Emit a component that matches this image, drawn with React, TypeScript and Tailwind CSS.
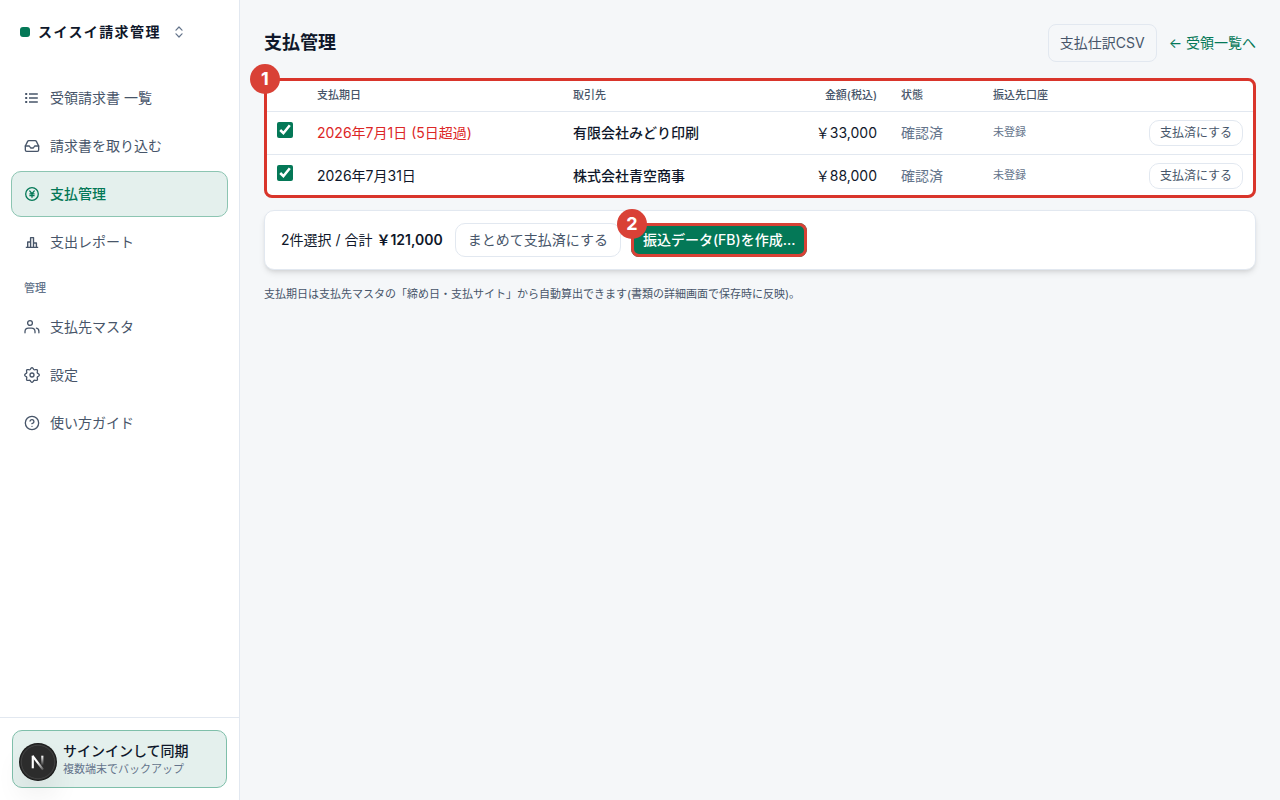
import React, { useState } from 'react';
import { CircleHelp, Inbox } from 'lucide-react';

const ListIcon = () => (
  <svg viewBox="0 0 16 16" className="size-4" fill="none" stroke="currentColor" strokeWidth="1.5" aria-hidden="true">
    <path d="M5 4h8.8M5 8h8.8M5 12h8.8" />
    <path d="M1.2 4h2M1.2 8h2M1.2 12h2" strokeWidth="2" />
  </svg>
);

const YenIcon = () => (
  <svg viewBox="0 0 16 16" className="size-4" fill="none" stroke="currentColor" strokeWidth="1.3" strokeLinecap="round" aria-hidden="true">
    <circle cx="8" cy="8" r="6.3" />
    <path d="M5.7 4.9L8 7.7l2.3-2.8M8 7.7v3.6M5.9 7.9h4.2M5.9 9.7h4.2" />
  </svg>
);

const BarsIcon = () => (
  <svg viewBox="0 0 16 16" className="size-4" fill="none" stroke="currentColor" strokeWidth="1.4" strokeLinejoin="round" aria-hidden="true">
    <path d="M1.8 13.4h12.4M3.7 13.4V8h2.9M6.6 13.4V3.6h2.9v9.8M9.5 9h2.9v4.4" />
  </svg>
);

const PeopleIcon = () => (
  <svg viewBox="0 0 16 16" className="size-4" fill="none" stroke="currentColor" strokeWidth="1.3" strokeLinecap="round" aria-hidden="true">
    <circle cx="6" cy="4" r="2.4" />
    <path d="M1 13.8v-1.3a3.4 3.4 0 0 1 3.4-3.3h3.2a3.4 3.4 0 0 1 3.4 3.3v1.3" />
    <path d="M12.4 9.2a3.2 3.2 0 0 1 2.5 3.2v1.4" />
  </svg>
);

// eight round teeth
const gearPoints = Array.from({ length: 96 }, (_, i) => {
  const a = (i / 96) * Math.PI * 2;
  const r = 6.5 + 0.8 * Math.cos(8 * a);
  return `${(8 + r * Math.cos(a)).toFixed(2)},${(8 + r * Math.sin(a)).toFixed(2)}`;
}).join(' ');

const GearIcon = () => (
  <svg viewBox="0 0 16 16" className="size-4" fill="none" stroke="currentColor" strokeWidth="1.3" strokeLinejoin="round" aria-hidden="true">
    <polygon points={gearPoints} />
    <circle cx="8" cy="8" r="2" />
  </svg>
);

const mainNav = [
  { label: '受領請求書 一覧', icon: <ListIcon /> },
  { label: '請求書を取り込む', icon: <Inbox className="size-4" strokeWidth={2} /> },
  { label: '支払管理', icon: <YenIcon />, active: true },
  { label: '支出レポート', icon: <BarsIcon /> },
];

const adminNav = [
  { label: '支払先マスタ', icon: <PeopleIcon /> },
  { label: '設定', icon: <GearIcon /> },
  { label: '使い方ガイド', icon: <CircleHelp className="size-4" strokeWidth={2} /> },
];

const payments = [
  { id: 1, due: '2026年7月1日 (5日超過)', overdue: true, vendor: '有限会社みどり印刷', amount: 33000 },
  { id: 2, due: '2026年7月31日', overdue: false, vendor: '株式会社青空商事', amount: 88000 },
];

const yen = (n: number) => n.toLocaleString('ja-JP', { style: 'currency', currency: 'JPY' });

type NavItemProps = { label: string; icon: React.ReactNode; active?: boolean };

const NavItem = ({ label, icon, active }: NavItemProps) => (
  <a
    href="#"
    aria-current={active ? 'page' : undefined}
    className={
      active
        ? 'flex h-[46px] items-center gap-2.5 rounded-[10px] border border-[#8cc5b2] bg-[#e4f0ed] px-3 font-medium text-[#047857]'
        : 'flex h-[46px] items-center gap-2.5 rounded-[10px] border border-transparent px-3 text-[#475569]'
    }
  >
    {icon}
    {label}
  </a>
);

const StepBadge = ({ n }: { n: number }) => (
  <span className="absolute -top-3.5 -left-3.5 flex size-[30px] items-center justify-center rounded-full bg-[#d94136] text-lg font-bold text-white">
    {n}
  </span>
);

const App = () => {
  const [selected, setSelected] = useState<number[]>([1, 2]);

  const toggle = (id: number) =>
    setSelected((prev) => (prev.includes(id) ? prev.filter((x) => x !== id) : [...prev, id]));

  const total = payments.filter((p) => selected.includes(p.id)).reduce((sum, p) => sum + p.amount, 0);

  return (
    <div
      lang="ja"
      className="flex min-h-screen bg-[#f5f7f9] font-['Inter','Noto_Sans_CJK_JP',sans-serif] text-sm text-[#0f172a]"
    >
      <aside className="flex w-60 shrink-0 flex-col border-r border-[#e2e8f0] bg-white">
        <button type="button" className="flex h-16 items-center gap-2 px-5 text-left">
          <span className="size-2.5 rounded-[3px] bg-[#047857]" />
          <span className="font-bold tracking-widest">スイスイ請求管理</span>
          <svg viewBox="0 0 16 16" className="ml-0.5 size-4" fill="none" stroke="#64748b" strokeWidth="1.2" strokeLinecap="round" strokeLinejoin="round" aria-hidden="true">
            <path d="M5 6.2L8 3l3 3.2M5 9.8L8 13l3-3.2" />
          </svg>
        </button>

        <nav className="flex flex-col gap-0.5 px-[11px] pt-[11px]">
          {mainNav.map((item) => (
            <NavItem key={item.label} {...item} />
          ))}
          <p className="px-[13px] pt-[13px] pb-1.5 text-[11px] leading-4 font-medium text-[#64748b]">管理</p>
          {adminNav.map((item) => (
            <NavItem key={item.label} {...item} />
          ))}
        </nav>

        <div className="mt-auto border-t border-[#e2e8f0] p-3">
          <button
            type="button"
            className="block w-full rounded-[10px] border border-[#7fbfaa] bg-[#e4f0ed] py-2.5 pr-3 pl-[50px] text-left"
          >
            <span className="block leading-5 font-medium">サインインして同期</span>
            <span className="block text-[11px] leading-4 text-[#64748b]">複数端末でバックアップ</span>
          </button>
        </div>
      </aside>

      <main className="min-w-0 flex-1 p-6">
        <header className="flex items-center justify-between">
          <h1 className="text-lg font-bold">支払管理</h1>
          <div className="flex items-center gap-3">
            <button type="button" className="rounded-lg border border-[#e2e8f0] px-[11px] py-2 leading-5 text-[#475569]">
              支払仕訳CSV
            </button>
            <a href="#" className="text-[#047857]">← 受領一覧へ</a>
          </div>
        </header>

        {/* 手順1: 支払対象の選択 */}
        <section className="relative mt-4">
          <div className="overflow-hidden rounded-lg border border-[#e2e8f0] bg-white outline-3 -outline-offset-3 outline-[#d9352b]">
            <table className="w-full table-fixed text-left">
              <thead>
                <tr className="h-8 border-b border-[#e2e8f0] text-[11px] leading-4 text-[#475569]">
                  <th className="w-10"></th>
                  <th className="w-64 px-3 font-medium">支払期日</th>
                  <th className="px-3 font-medium">取引先</th>
                  <th className="w-24 px-3 text-right font-medium">金額(税込)</th>
                  <th className="w-[92px] px-3 font-medium">状態</th>
                  <th className="w-[156px] px-3 font-medium">振込先口座</th>
                  <th className="w-[118px]"></th>
                </tr>
              </thead>
              <tbody>
                {payments.map((p) => (
                  <tr key={p.id} className="border-b border-[#e2e8f0] last:border-b-0">
                    <td className="px-3">
                      <input
                        type="checkbox"
                        aria-label={p.vendor}
                        checked={selected.includes(p.id)}
                        onChange={() => toggle(p.id)}
                        className="mb-1.5 block size-4 accent-[#047857]"
                      />
                    </td>
                    <td className={p.overdue ? 'px-3 text-[#dc2626]' : 'px-3'}>{p.due}</td>
                    <td className="px-3 font-medium">{p.vendor}</td>
                    <td className="pr-3 text-right">{yen(p.amount)}</td>
                    <td className="px-3 text-[#64748b]">確認済</td>
                    <td className="px-3 text-[11px] text-[#64748b]">未登録</td>
                    <td className="px-3 py-2">
                      <button
                        type="button"
                        className="block w-full rounded-[10px] border border-[#e2e8f0] py-1 text-xs whitespace-nowrap text-[#475569]"
                      >
                        支払済にする
                      </button>
                    </td>
                  </tr>
                ))}
              </tbody>
            </table>
          </div>
          <StepBadge n={1} />
        </section>

        <section className="mt-3 flex items-center gap-3 rounded-[10px] border border-[#e2e8f0] bg-white px-4 py-3 shadow-md">
          <p>
            {selected.length}件選択 / 合計 <strong className="font-semibold">{yen(total)}</strong>
          </p>
          <div className="flex items-center gap-2.5">
            <button type="button" className="rounded-[10px] border border-[#e2e8f0] px-3 py-1.5 leading-5 text-[#475569]">
              まとめて支払済にする
            </button>
            {/* 手順2: FBデータの作成 */}
            <div className="relative">
              <button
                type="button"
                className="block rounded-lg bg-[#047857] px-3 py-[7px] leading-5 font-medium text-white outline-3 -outline-offset-3 outline-[#d94136]"
              >
                振込データ(FB)を作成…
              </button>
              <StepBadge n={2} />
            </div>
          </div>
        </section>

        <p className="mt-4 text-[11px] leading-4 text-[#475569]">
          支払期日は支払先マスタの「締め日・支払サイト」から自動算出できます(書類の詳細画面で保存時に反映)。
        </p>
      </main>

      <div className="fixed bottom-5 left-5 flex size-9 items-center justify-center rounded-full bg-[#2c2c2c] shadow-[0_16px_32px_-8px_rgba(0,0,0,0.24)] ring-1 ring-[#171717]">
        <svg viewBox="0 0 40 40" className="size-9" fill="none" strokeWidth="2.4" aria-label="Next.js">
          <defs>
            <linearGradient id="stem" x1="0" y1="13" x2="0" y2="24" gradientUnits="userSpaceOnUse">
              <stop stopColor="#fff" />
              <stop offset="1" stopColor="#fff" stopOpacity="0" />
            </linearGradient>
            <linearGradient id="slope" x1="20" y1="20" x2="27" y2="29" gradientUnits="userSpaceOnUse">
              <stop stopColor="#fff" />
              <stop offset="1" stopColor="#fff" stopOpacity="0.1" />
            </linearGradient>
          </defs>
          <circle cx="20" cy="20" r="18.6" stroke="#4a4a4a" strokeWidth="0.8" />
          <line x1="14.2" y1="13" x2="14.2" y2="27" stroke="#fff" />
          <line x1="14" y1="13.2" x2="25.6" y2="28.4" stroke="url(#slope)" />
          <line x1="24.8" y1="13" x2="24.8" y2="24" stroke="url(#stem)" />
        </svg>
      </div>
    </div>
  );
};

export default App;
